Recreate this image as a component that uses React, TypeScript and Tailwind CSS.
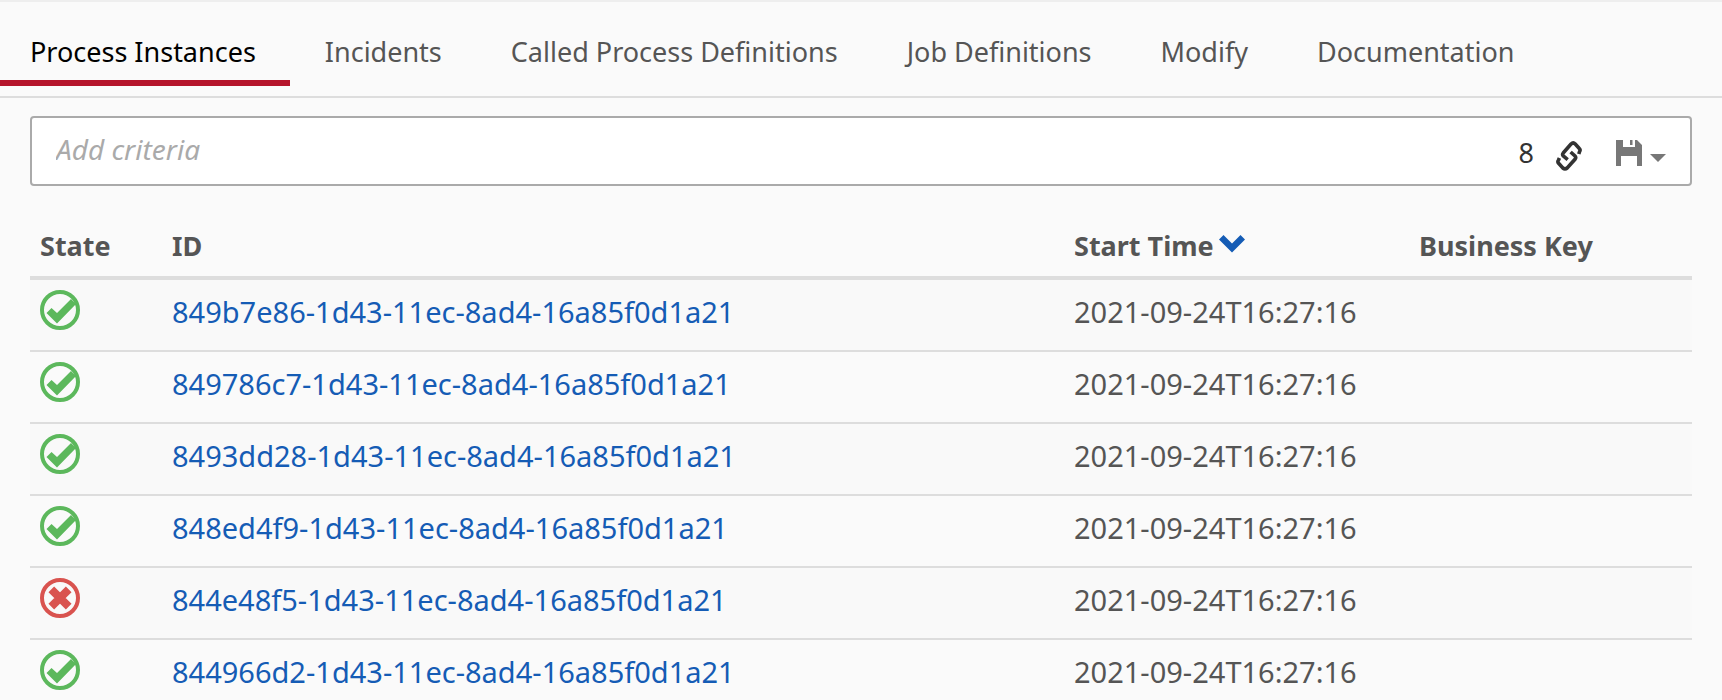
import React from "react";

const tabs = [
  { label: "Process Instances", active: true },
  { label: "Incidents", active: false },
  { label: "Called Process Definitions", active: false },
  { label: "Job Definitions", active: false },
  { label: "Modify", active: false },
  { label: "Documentation", active: false },
];

const rows = [
  { id: "849b7e86-1d43-11ec-8ad4-16a85f0d1a21", ok: true },
  { id: "849786c7-1d43-11ec-8ad4-16a85f0d1a21", ok: true },
  { id: "8493dd28-1d43-11ec-8ad4-16a85f0d1a21", ok: true },
  { id: "848ed4f9-1d43-11ec-8ad4-16a85f0d1a21", ok: true },
  { id: "844e48f5-1d43-11ec-8ad4-16a85f0d1a21", ok: false },
  { id: "844966d2-1d43-11ec-8ad4-16a85f0d1a21", ok: true },
];

const headCell = "border-b-4 border-[#ddd] px-[10px] pt-1 pb-[10px]";
const bodyCell = "border-b-2 border-[#ddd] px-[10px] pt-3 align-top";

function StateIcon({ ok }: { ok: boolean }) {
  return ok ? (
    <svg role="img" aria-label="Completed" viewBox="0 0 40 40" className="block size-10 text-[#5cb85c]">
      <circle cx="20" cy="20" r="18" fill="none" stroke="currentColor" strokeWidth="4" />
      <path d="M6.500 23 11.500 18 17 23 31 9 36 14 17 33.500Z" fill="currentColor" />
    </svg>
  ) : (
    <svg role="img" aria-label="Failed" viewBox="0 0 40 40" className="block size-10 text-[#d9534f]">
      <circle cx="20" cy="20" r="18" fill="none" stroke="currentColor" strokeWidth="4" />
      <path d="M11.300 11.300 28.700 28.700M28.700 11.300 11.300 28.700" stroke="currentColor" strokeWidth="8" />
    </svg>
  );
}

export default function App() {
  return (
    <div className="h-screen overflow-hidden border-t-2 border-[#eee] bg-[#fafafa] font-['Noto_Sans',sans-serif] text-[27px] leading-10 text-[#555]">
      <nav aria-label="Process details" className="border-b-2 border-[#ddd] pb-[10px]">
        <ul className="flex gap-[5px]">
          {tabs.map((t) => (
            <li key={t.label}>
              <a
                href="#"
                aria-current={t.active ? "page" : undefined}
                className={
                  t.active
                    ? "block whitespace-nowrap border-b-6 border-[#b5152b] pt-[30px] pr-[34px] pb-2 pl-[30px] text-black"
                    : "block whitespace-nowrap border-b-6 border-transparent pt-[30px] pr-[34px] pb-2 pl-[30px]"
                }
              >
                {t.label}
              </a>
            </li>
          ))}
        </ul>
      </nav>

      <main className="px-[30px] pt-[18px]">
        <div className="flex h-[70px] items-center rounded-[4px] border-2 border-[#aaa] bg-white px-6">
          <input
            aria-label="Add criteria"
            placeholder="Add criteria"
            className="min-w-0 flex-1 pb-1 text-[28px] italic outline-none placeholder:text-[#aaa]"
          />
          <div className="mt-1 flex items-center">
            <span className="text-[#333]">8</span>
            <button type="button" aria-label="Copy link" className="ml-[22px] text-[#333]">
              <svg
                viewBox="0 0 26 30"
                className="mt-[6px] block h-[30px] w-[26px]"
                fill="none"
                stroke="currentColor"
                strokeWidth="3.600"
              >
                <path d="M22.800 13 23.600 10.500Q24.600 9 23.500 7.800L19.300 3Q17.200 1 15 3L7.200 12Q6 13.500 7.300 15L11.700 18.600" />
                <path d="M3.400 17 2.400 19.300Q1.300 20.800 2.600 22.300L6.800 27Q9 28.800 11.200 27L19.200 18Q20.300 16.500 19 15L14.600 11" />
              </svg>
            </button>
            <button type="button" aria-label="Save query" className="ml-[34px] flex items-center gap-2 text-[#777]">
              <svg viewBox="0 0 26 26" className="block size-[26px]" fill="currentColor">
                <path d="M0 0H7V7H19V0H21L26 5V26H21V16H5V26H0ZM14 0H16.500V5H14Z" />
              </svg>
              <svg viewBox="0 0 16 8" className="mt-[10px] block h-2 w-4" fill="currentColor">
                <path d="M0 0H16L8 8Z" />
              </svg>
            </button>
          </div>
        </div>

        <table className="mt-9 w-full table-fixed border-separate border-spacing-0 text-left">
          <colgroup>
            <col className="w-[132px]" />
            <col />
            <col className="w-[345px]" />
            <col className="w-[283px]" />
          </colgroup>
          <thead>
            <tr>
              <th className={headCell}>State</th>
              <th className={headCell}>ID</th>
              <th className={headCell} aria-sort="descending">
                <button type="button" className="flex items-center gap-[5px] font-bold">
                  Start Time
                  <svg viewBox="0 0 26 18" className="mb-1 block h-[18px] w-[26px] text-[#155cb5]" fill="currentColor">
                    <path d="M4.500 0 13 8.500 21.500 0 26 4.500 13 17.500 0 4.500Z" />
                  </svg>
                </button>
              </th>
              <th className={headCell}>Business Key</th>
            </tr>
          </thead>
          <tbody className="text-[29px]">
            {rows.map((r) => (
              <tr key={r.id} className="h-[72px] odd:bg-[#f9f9f9]">
                <td className="border-b-2 border-[#ddd] px-[10px] pt-[10px] align-top">
                  <StateIcon ok={r.ok} />
                </td>
                <td className={bodyCell}>
                  <a href="#" className="text-[#155cb5]">{r.id}</a>
                </td>
                <td className={bodyCell}>2021-09-24T16:27:16</td>
                <td className={bodyCell} />
              </tr>
            ))}
          </tbody>
        </table>
      </main>
    </div>
  );
}
